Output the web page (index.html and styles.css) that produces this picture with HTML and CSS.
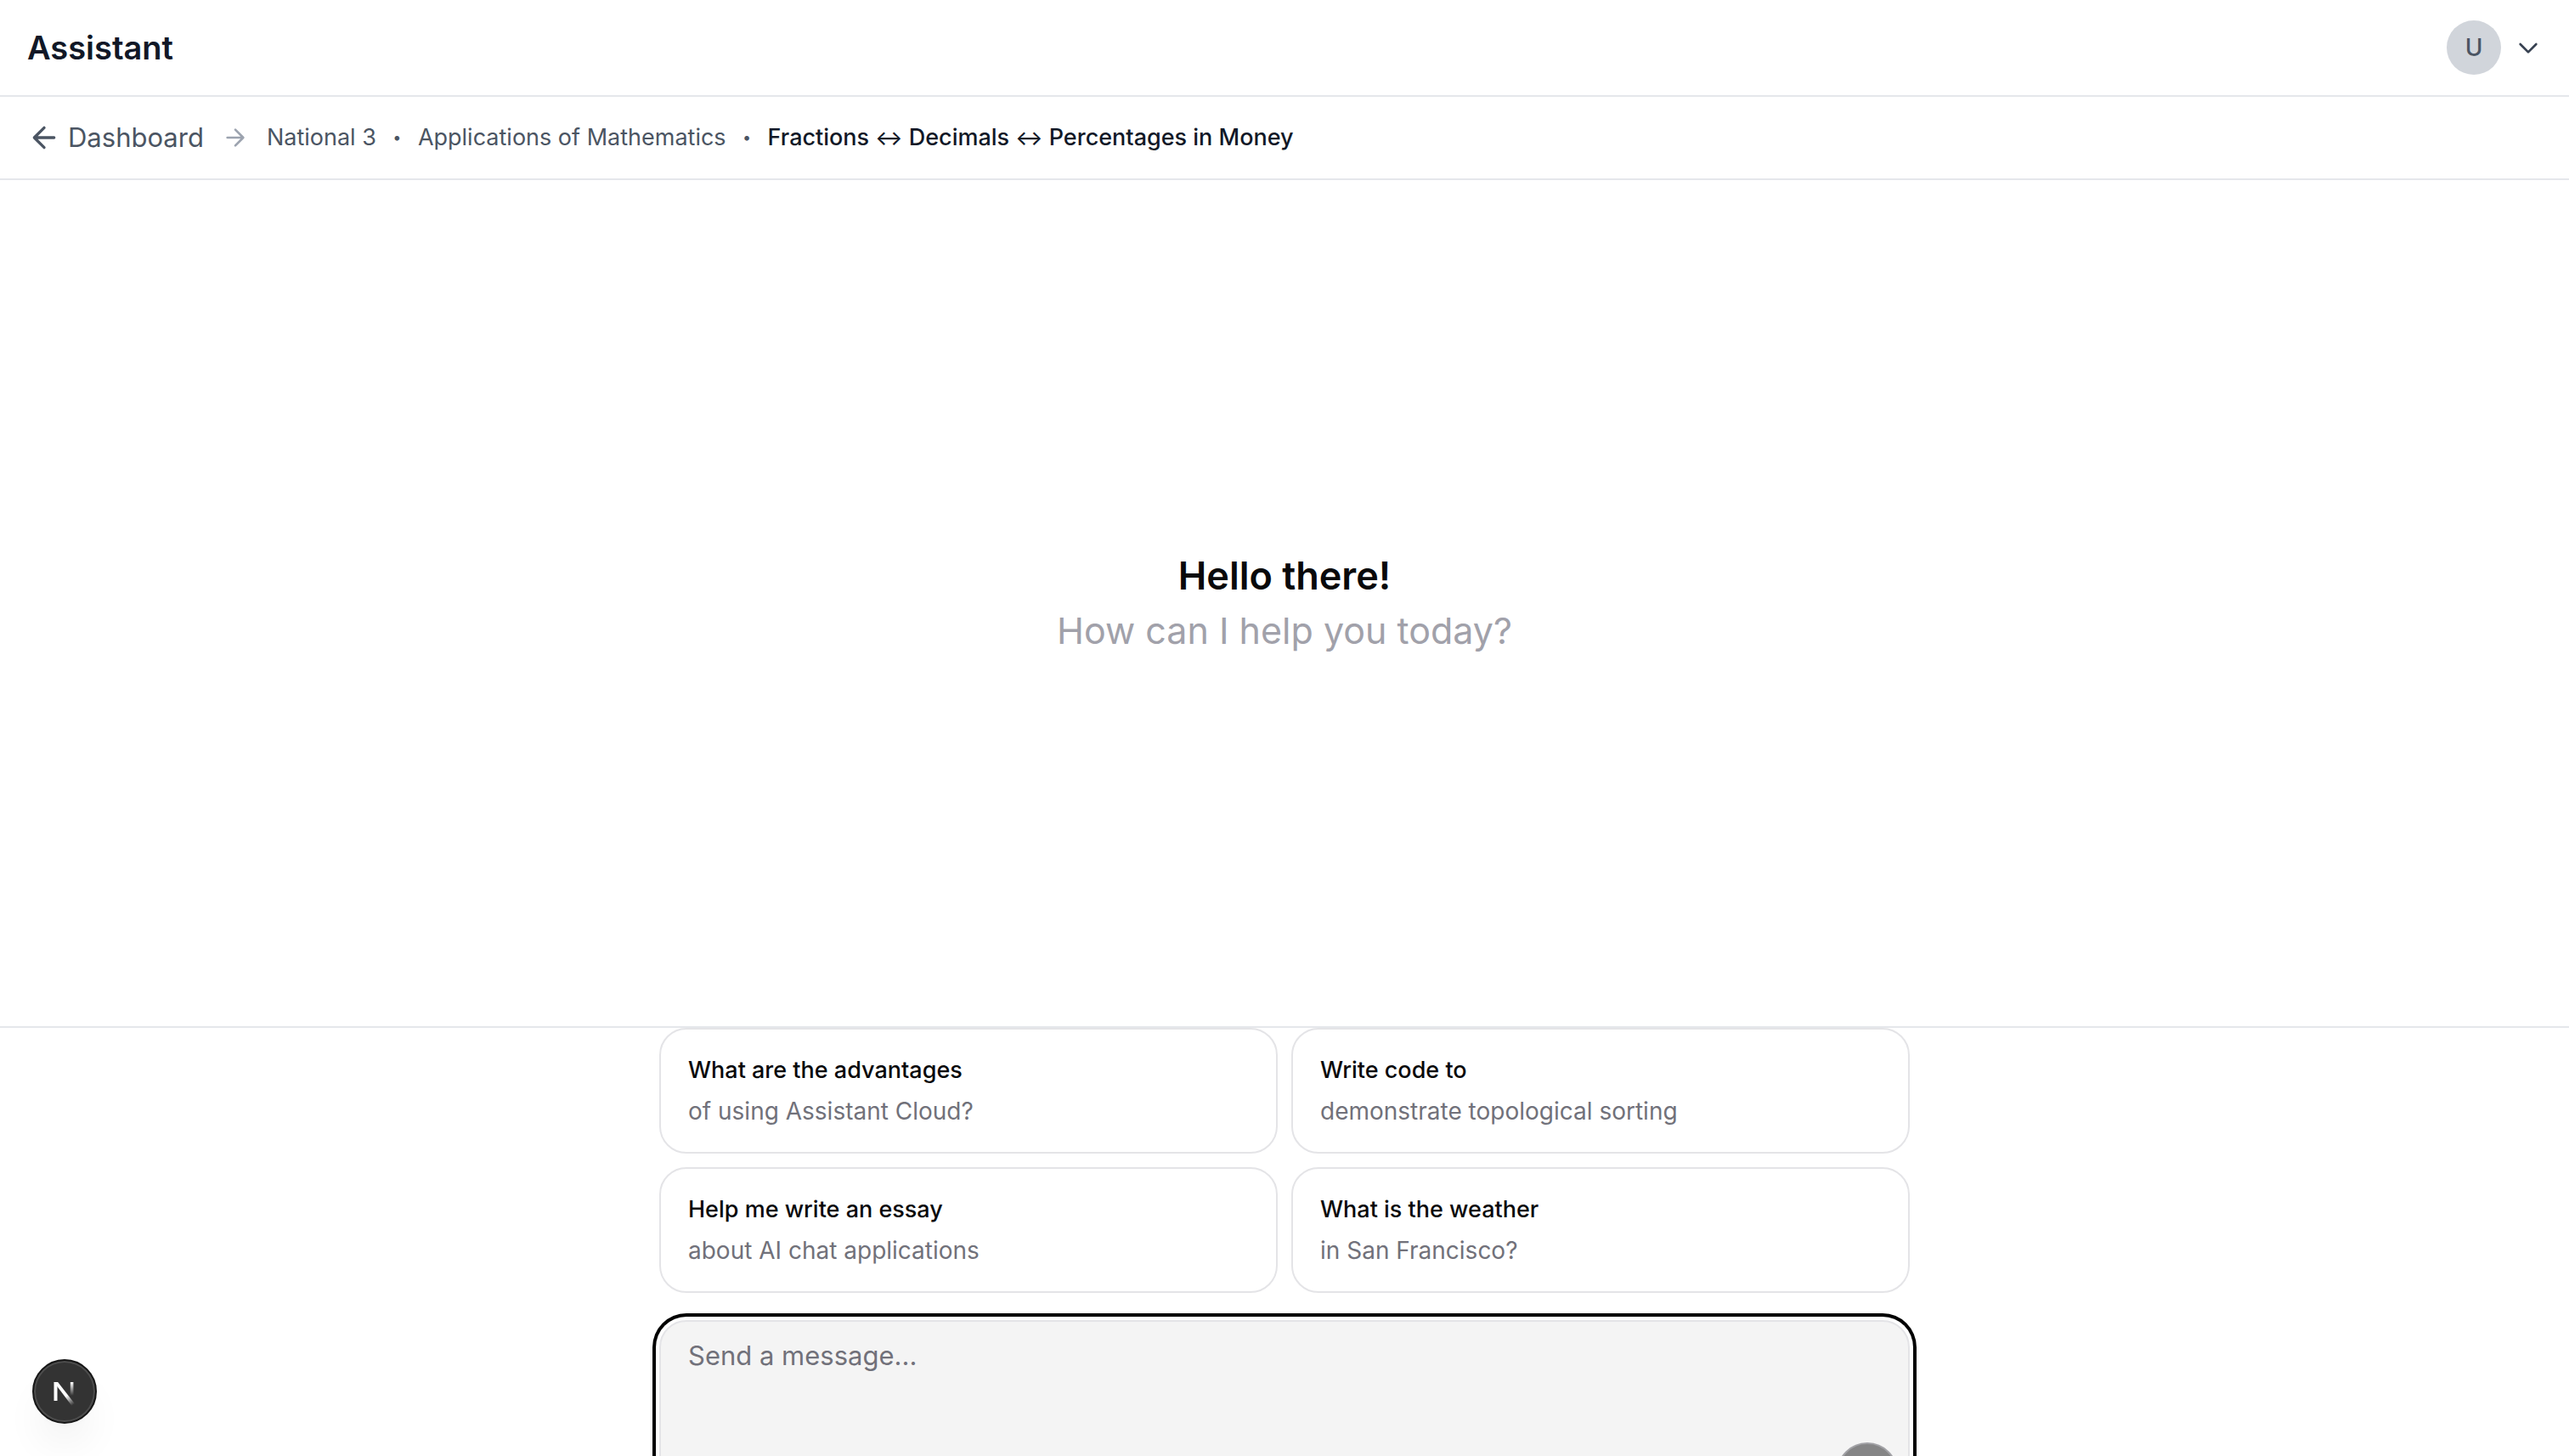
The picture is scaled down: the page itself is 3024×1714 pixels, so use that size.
FILE: index.html
```
<!DOCTYPE html>
<html lang="en">
<head>
  <meta charset="utf-8">
  <meta name="viewport" content="width=device-width, initial-scale=1">
  <title>Assistant</title>
  <link rel="stylesheet" href="styles.css">
</head>
<body>
  <header class="topbar">
    <h1 class="topbar-title">Assistant</h1>
    <button class="account" type="button" aria-label="Account menu">
      <span class="avatar">U</span>
      <svg class="icon-md" viewBox="0 0 24 24" aria-hidden="true"><path d="M19 9l-7 7-7-7"/></svg>
    </button>
  </header>

  <nav class="crumbs" aria-label="Breadcrumb">
    <a class="back" href="#">
      <svg class="icon-lg" viewBox="0 0 24 24" aria-hidden="true"><path d="M12 19l-7-7 7-7M5 12h14"/></svg>
      Dashboard
    </a>
    <svg class="icon-md crumbs-arrow" viewBox="0 0 24 24" aria-hidden="true"><path d="M5 12h14M12 5l7 7-7 7"/></svg>
    <div class="trail">
      <span>National 3</span>
      <span class="dot">•</span>
      <span>Applications of Mathematics</span>
      <span class="dot">•</span>
      <span class="current">Fractions <span class="swap">↔</span> Decimals <span class="swap">↔</span> Percentages in Money</span>
    </div>
  </nav>

  <main>
    <section class="welcome">
      <p class="welcome-title">Hello there!</p>
      <p class="welcome-subtitle">How can I help you today?</p>
    </section>

    <section class="dock">
      <div class="suggestions">
        <button class="suggestion" type="button"><span class="suggestion-title">What are the advantages</span><span class="suggestion-text">of using Assistant Cloud?</span></button>
        <button class="suggestion" type="button"><span class="suggestion-title">Write code to</span><span class="suggestion-text">demonstrate topological sorting</span></button>
        <button class="suggestion" type="button"><span class="suggestion-title">Help me write an essay</span><span class="suggestion-text">about AI chat applications</span></button>
        <button class="suggestion" type="button"><span class="suggestion-title">What is the weather</span><span class="suggestion-text">in San Francisco?</span></button>
      </div>
      <form class="composer">
        <textarea class="composer-input" placeholder="Send a message..." aria-label="Message input"></textarea>
        <div class="composer-actions">
          <button class="send" type="submit" aria-label="Send message" disabled>
            <svg class="icon-md" viewBox="0 0 24 24" aria-hidden="true"><path d="M5 12l7-7 7 7M12 19V5"/></svg>
          </button>
        </div>
      </form>
    </section>
  </main>

  <button class="devtools" type="button" aria-label="Open developer tools">
    <svg class="devtools-logo" viewBox="0 0 40 40" aria-hidden="true">
      <defs>
        <linearGradient id="diagonal" gradientUnits="userSpaceOnUse" x1="22" y1="25" x2="30" y2="36">
          <stop offset="0" stop-color="#fff"/>
          <stop offset="1" stop-color="#fff" stop-opacity="0"/>
        </linearGradient>
        <linearGradient id="stem" gradientUnits="userSpaceOnUse" x1="28" y1="9" x2="28" y2="25">
          <stop offset="0" stop-color="#fff"/>
          <stop offset="1" stop-color="#fff" stop-opacity="0"/>
        </linearGradient>
      </defs>
      <path fill="#fff" d="M7.5 9h4v22h-4z"/>
      <path fill="url(#diagonal)" d="M7.5 9h4.6L32 34.5 28.6 37z"/>
      <path fill="url(#stem)" d="M26.8 9h3.6v16h-3.6z"/>
    </svg>
  </button>
</body>
</html>
```

FILE: styles.css
```
*,
*::before,
*::after {
  box-sizing: border-box;
}

body {
  margin: 0;
  height: 100vh;
  overflow: hidden;
  background: #fff;
  color: #09090b;
  font-family: Inter, "Liberation Sans", sans-serif;
  font-size: 28px;
  line-height: 40px;
}

button,
textarea {
  margin: 0;
  font: inherit;
  color: inherit;
}

h1,
p {
  margin: 0;
}

svg {
  display: block;
  flex: none;
  fill: none;
  stroke: currentColor;
  stroke-width: 2;
  stroke-linecap: round;
  stroke-linejoin: round;
}

.icon-md {
  width: 32px;
  height: 32px;
}

.icon-lg {
  width: 40px;
  height: 40px;
}

/* Top bar */

.topbar {
  display: flex;
  align-items: center;
  justify-content: space-between;
  padding: 24px 32px;
  border-bottom: 2px solid #e5e7eb;
}

.topbar-title {
  color: #111827;
  font-size: 38px;
  font-weight: 600;
}

.account {
  display: flex;
  align-items: center;
  gap: 16px;
  padding: 0;
  border: 0;
  background: none;
  color: #374151;
}

.avatar {
  display: grid;
  place-items: center;
  width: 64px;
  height: 64px;
  border-radius: 50%;
  background: #d1d5db;
  color: #4b5563;
  font-weight: 500;
}

/* Breadcrumb */

.crumbs {
  display: flex;
  align-items: center;
  gap: 21px;
  padding: 24px 32px;
  border-bottom: 2px solid #e5e7eb;
  color: #4b5563;
  line-height: 48px;
}

.back {
  display: flex;
  align-items: center;
  gap: 8px;
  color: inherit;
  font-size: 31px;
  text-decoration: none;
}

.crumbs-arrow {
  color: #9ca3af;
}

.trail {
  display: flex;
  align-items: center;
  font-size: 27px;
}

.dot {
  width: 49px;
  font-size: 18px;
  text-align: center;
}

.current {
  color: #111827;
  font-weight: 500;
}

.swap {
  font-size: 24px;
  line-height: 1;
}

/* Welcome area */

.welcome {
  display: flex;
  flex-direction: column;
  align-items: center;
  justify-content: center;
  height: calc(100vh - 716px);
  border-bottom: 2px solid #e5e7eb;
  line-height: 64px;
}

.welcome-title {
  font-size: 45px;
  font-weight: 600;
}

.welcome-subtitle {
  color: #a1a1aa;
  font-size: 43px;
}

/* Suggestions and composer */

.dock {
  display: flex;
  flex-direction: column;
  gap: 32px;
  max-width: 1472px;
  margin: 0 auto;
}

.suggestions {
  display: grid;
  grid-template-columns: 1fr 1fr;
  gap: 16px;
}

.suggestion {
  display: flex;
  flex-direction: column;
  gap: 8px;
  padding: 28px 32px;
  border: 2px solid #e4e4e7;
  border-radius: 32px;
  background: #fff;
  text-align: left;
}

.suggestion-title {
  font-size: 27px;
  font-weight: 500;
}

.suggestion-text {
  color: #71717a;
}

.composer {
  border: 2px solid #e4e4e7;
  border-radius: 32px;
  background: #f4f4f4;
  box-shadow: 0 0 0 4px #fff, 0 0 0 8px #000;
}

.composer-input {
  display: block;
  width: 100%;
  height: 128px;
  padding: 16px 32px;
  border: 0;
  outline: 0;
  background: none;
  font-size: 31px;
  line-height: 48px;
  resize: none;
}

.composer-input::placeholder {
  color: #71717a;
  opacity: 1;
}

.composer-actions {
  display: flex;
  justify-content: flex-end;
  padding: 14px 12px;
}

.send {
  display: grid;
  place-items: center;
  width: 72px;
  height: 72px;
  padding: 0;
  border: 2px solid #52525b;
  border-radius: 50%;
  background: #18181b;
  color: #fff;
  opacity: 0.5;
}

/* Floating developer button */

.devtools {
  position: fixed;
  bottom: 38px;
  left: 38px;
  display: grid;
  place-items: center;
  width: 76px;
  height: 76px;
  padding: 0;
  border: 2px solid #171717;
  border-radius: 50%;
  background: #333;
  box-shadow: inset 0 0 0 2px #4d4d4d, 0 8px 16px -8px rgba(0, 0, 0, 0.04), 0 32px 48px -8px rgba(0, 0, 0, 0.06);
}

.devtools-logo {
  width: 40px;
  height: 40px;
  stroke: none;
}
```
